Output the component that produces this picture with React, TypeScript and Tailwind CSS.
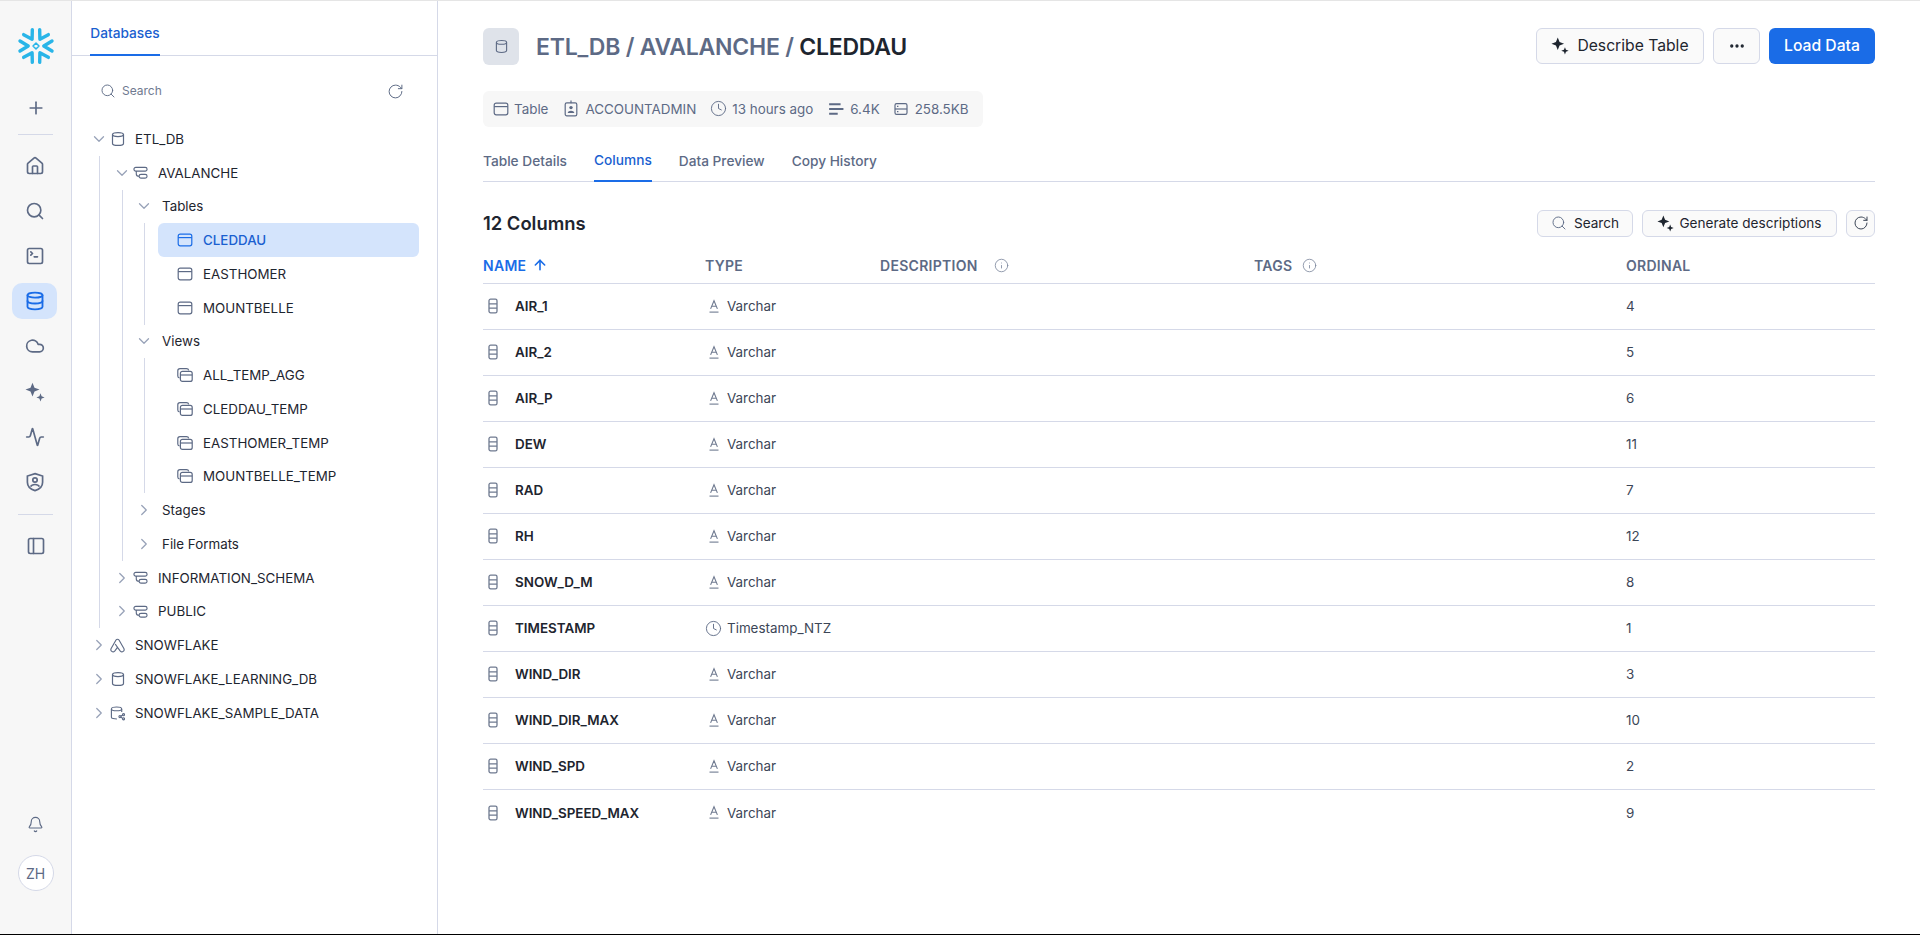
import React from 'react';
import { Plus, House, Search, SquareTerminal, Database, Cloud, Activity, PanelLeft, Bell, ChevronDown, ChevronRight, RotateCw, Info, Clock, Ellipsis, ArrowUp } from 'lucide-react';

type IconProps = { className?: string };

const Snowflake = () => (
  <svg width="38" height="38" viewBox="-19 -19 38 38" fill="none" stroke="#29b5e8" strokeWidth="3.4" strokeLinecap="round" strokeLinejoin="round">
    {[0, 60, 120, 180, 240, 300].map((a) => (
      <path key={a} transform={`rotate(${a})`} d="M16 -5 L7.8 0 L16 5" />
    ))}
    <path d="M0 -3 L3 0 L0 3 L-3 0 Z" strokeWidth="1.5" />
  </svg>
);

const Sparkle = ({ className }: IconProps) => (
  <svg className={className} viewBox="0 0 16 16" fill="currentColor">
    <path d="M6 0.5 L7.6 4.5 L11.6 6 L7.6 7.6 L6 11.6 L4.4 7.6 L0.4 6 L4.4 4.5 Z" />
    <path d="M12.4 9 L13.3 11.3 L15.7 12.3 L13.3 13.2 L12.4 15.6 L11.5 13.2 L9.1 12.3 L11.5 11.3 Z" />
  </svg>
);

const TableIcon = ({ className }: IconProps) => (
  <svg className={className} viewBox="0 0 16 16" fill="none" stroke="currentColor" strokeWidth="1.2">
    <rect x="1.2" y="2.2" width="13.6" height="11.6" rx="2" />
    <path d="M1.2 5.6 H14.8" />
  </svg>
);

const DbIcon = ({ className }: IconProps) => (
  <svg className={className} viewBox="0 0 14 16" fill="none" stroke="currentColor" strokeWidth="1.2">
    <path d="M1.5 3.6 C1.5 0.9 12.5 0.9 12.5 3.6 V12.4 C12.5 15.1 1.5 15.1 1.5 12.4 Z" />
    <path d="M1.5 3.6 C1.5 6.3 12.5 6.3 12.5 3.6" />
  </svg>
);

const SchemaIcon = ({ className }: IconProps) => (
  <svg className={className} viewBox="0 0 16 16" fill="none" stroke="currentColor" strokeWidth="1.2">
    <rect x="1" y="2.5" width="14" height="4" rx="2" />
    <rect x="6.5" y="10" width="8.5" height="4" rx="2" />
    <path d="M3.5 6.5 V9.5 C3.5 11.2 4.6 12 6.5 12" />
  </svg>
);

const ViewIcon = ({ className }: IconProps) => (
  <svg className={className} viewBox="0 0 16 16" fill="none" stroke="currentColor" strokeWidth="1.2">
    <path d="M2.6 11 C1.5 10.8 0.8 10 0.8 9 V3.8 C0.8 2.5 1.8 1.6 3 1.6 H9.5 C10.6 1.6 11.5 2.3 11.7 3.4" />
    <rect x="3.4" y="4.4" width="11.8" height="10" rx="2" />
    <path d="M3.4 8 H15.2" />
  </svg>
);

const ColumnIcon = ({ className }: IconProps) => (
  <svg className={className} viewBox="0 0 10 16" fill="none" stroke="currentColor" strokeWidth="1.3">
    <rect x="1" y="1.2" width="8" height="13.6" rx="1.6" />
    <path d="M1 5.8 H9 M1 10.2 H9" />
  </svg>
);

const VarcharIcon = ({ className }: IconProps) => (
  <svg className={className} viewBox="0 0 12 14" fill="none" stroke="currentColor" strokeWidth="1.1">
    <path d="M2.6 9.4 L6 1.2 L9.4 9.4 M3.7 6.8 H8.3" />
    <path d="M1.5 12.6 H10.5" />
  </svg>
);

const Badge = ({ className }: IconProps) => (
  <svg className={className} viewBox="0 0 14 17" fill="none" stroke="currentColor" strokeWidth="1.2">
    <rect x="1.2" y="2.8" width="11.6" height="13" rx="1.6" />
    <path d="M7 0.6 V3.2" />
    <circle cx="7" cy="7.6" r="1.7" fill="currentColor" stroke="none" />
    <path d="M3.7 13 C4 10 10 10 10.3 13 Z" fill="currentColor" stroke="none" />
  </svg>
);

const RowsIcon = ({ className }: IconProps) => (
  <svg className={className} viewBox="0 0 14 14" fill="none" stroke="currentColor" strokeWidth="1.8">
    <path d="M1 2.8 H11 M1 7 H13.5 M1 11.2 H8.5" />
  </svg>
);

const StorageIcon = ({ className }: IconProps) => (
  <svg className={className} viewBox="0 0 14 14" fill="none" stroke="currentColor" strokeWidth="1.2">
    <rect x="1" y="1.6" width="12" height="10.8" rx="1.6" />
    <path d="M1 7 H13" />
    <path d="M3 4.3 H4.4 M3 9.7 H4.4" />
  </svg>
);

const ShieldIcon = ({ className }: IconProps) => (
  <svg className={className} viewBox="0 0 20 20" fill="none" stroke="currentColor" strokeWidth="1.7">
    <path d="M10 1.6 L17.6 4 V10.2 C17.6 14.6 14 17.4 10 18.6 C6 17.4 2.4 14.6 2.4 10.2 V4 Z" />
    <circle cx="10" cy="8" r="2.2" />
    <path d="M5.6 14.6 C7 11.8 13 11.8 14.4 14.6" />
  </svg>
);

const ShareDbIcon = ({ className }: IconProps) => (
  <svg className={className} viewBox="0 0 16 16" fill="none" stroke="currentColor" strokeWidth="1.2">
    <path d="M7.4 14.4 C4.4 14.4 1.5 13.8 1.5 12.4 V3.6 C1.5 0.9 12.5 0.9 12.5 3.6 V7" />
    <path d="M1.5 3.6 C1.5 6.3 12.5 6.3 12.5 3.6" />
    <circle cx="10.6" cy="11.8" r="1.1" />
    <circle cx="14.4" cy="9.8" r="1.1" />
    <circle cx="14.4" cy="14.2" r="1.1" />
    <path d="M11.6 11.3 L13.4 10.3 M11.6 12.3 L13.4 13.7" />
  </svg>
);

const SharedIcon = ({ className }: IconProps) => (
  <svg className={className} viewBox="0 0 16 16" fill="none" stroke="currentColor" strokeWidth="1.2" strokeLinejoin="round">
    <path d="M6.4 2.2 C7.2 1 8.8 1 9.6 2.2 L14.8 11.2 C16 13.8 13 15.8 11 14 L8 10 L5 14 C3 15.8 0 13.8 1.2 11.2 Z" />
    <path d="M8 10 L5.6 6.4" />
  </svg>
);

const railIcon = 'w-5 h-5 text-[#5d6a85]';
const railRow = 'h-[45.2px] flex items-center';

const Rail = () => (
  <aside className="w-[72px] shrink-0 bg-[#f7f7f7] border-r border-[#d5d9e8] flex flex-col items-center">
    <div className="mt-[26px] h-[38px] flex items-center justify-center">
      <Snowflake />
    </div>
    <div className="mt-[31px] h-6 flex items-center justify-center">
      <Plus className="w-5 h-5 text-[#5d6a85]" strokeWidth={2} />
    </div>
    <div className="mt-[14px] w-[35px] h-px bg-[#d5d9e8]" />
    <nav className="mt-[8px] pr-[2px] flex flex-col items-center">
      <div className={railRow}><House className={railIcon} strokeWidth={2} /></div>
      <div className={railRow}><Search className={railIcon} strokeWidth={2} /></div>
      <div className={railRow}><SquareTerminal className={railIcon} strokeWidth={2} /></div>
      <div className={railRow}>
        <div className="w-[45px] h-[36px] rounded-[10px] bg-[#d4e4fc] flex items-center justify-center">
          <Database className="w-5 h-5 text-[#1a6ce7]" strokeWidth={2.2} />
        </div>
      </div>
      <div className={railRow}><Cloud className={railIcon} strokeWidth={2} /></div>
      <div className={railRow}><Sparkle className={railIcon} /></div>
      <div className={railRow}><Activity className={railIcon} strokeWidth={2} /></div>
      <div className={railRow}><ShieldIcon className={railIcon} /></div>
    </nav>
    <div className="mt-[9px] w-[35px] h-px bg-[#d5d9e8]" />
    <div className="mt-[21px] h-5 flex items-center">
      <PanelLeft className={railIcon} strokeWidth={2} />
    </div>
    <div className="mt-auto h-5 flex items-center">
      <Bell className="w-[17px] h-[17px] text-[#5d6a85]" strokeWidth={1.6} />
    </div>
    <div className="mt-[21px] mb-[43px] w-9 h-9 rounded-full border border-[#d5d9e8] bg-white flex items-center justify-center text-[14px] text-[#5d6a85]">
      ZH
    </div>
  </aside>
);

const Chevron = ({ open }: { open?: boolean }) => (
  <span className="w-[14px] shrink-0 flex items-center justify-center text-[#98a2b8]">
    {open ? <ChevronDown className="w-[18px] h-[18px] shrink-0" strokeWidth={1.7} /> : <ChevronRight className="w-[18px] h-[18px] shrink-0" strokeWidth={1.7} />}
  </span>
);

const rowCls = 'h-[33.76px] flex items-center text-[13.35px] text-[#1e252f] whitespace-nowrap';
const iconCls = 'w-[14px] h-4 text-[#5d6a85] shrink-0';

const DbRow = ({ open, icon, label }: { open?: boolean; icon: React.ReactNode; label: string }) => (
  <div className={rowCls}>
    <Chevron open={open} />
    <span className="ml-[4px] w-[15px] flex justify-center">{icon}</span>
    <span className="ml-[10px]">{label}</span>
  </div>
);

const SchemaRow = ({ open, label }: { open?: boolean; label: string }) => (
  <div className={rowCls}>
    <Chevron open={open} />
    <span className="ml-[4px] w-[15px] flex justify-center"><SchemaIcon className="w-[15px] h-[15px] text-[#5d6a85]" /></span>
    <span className="ml-[10px]">{label}</span>
  </div>
);

const KindRow = ({ open, label }: { open?: boolean; label: string }) => (
  <div className={rowCls}>
    <Chevron open={open} />
    <span className="ml-[11px]">{label}</span>
  </div>
);

const LeafRow = ({ view, active, label }: { view?: boolean; active?: boolean; label: string }) => (
  <div className={`${rowCls} rounded-[6px] pl-[19px] ${active ? 'bg-[#d4e4fc] !text-[#1a5fd0] font-medium' : ''}`}>
    {view ? (
      <ViewIcon className="w-4 h-4 text-[#5d6a85] shrink-0" />
    ) : (
      <TableIcon className={`w-4 h-4 shrink-0 ${active ? 'text-[#1a6ce7]' : 'text-[#5d6a85]'}`} />
    )}
    <span className="ml-[10px]">{label}</span>
  </div>
);

const Guide = ({ children, pad }: { children: React.ReactNode; pad: string }) => (
  <div className={`ml-[7px] border-l border-[#d5d9e8] ${pad}`}>{children}</div>
);

const Tree = () => (
  <div className="mt-[17px] pl-[20px] pr-[18px]">
    <DbRow open label="ETL_DB" icon={<DbIcon className={iconCls} />} />
    <Guide pad="pl-[15px]">
      <SchemaRow open label="AVALANCHE" />
      <Guide pad="pl-[14px]">
        <KindRow open label="Tables" />
        <Guide pad="pl-[13px]">
          <LeafRow active label="CLEDDAU" />
          <LeafRow label="EASTHOMER" />
          <LeafRow label="MOUNTBELLE" />
        </Guide>
        <KindRow open label="Views" />
        <Guide pad="pl-[13px]">
          <LeafRow view label="ALL_TEMP_AGG" />
          <LeafRow view label="CLEDDAU_TEMP" />
          <LeafRow view label="EASTHOMER_TEMP" />
          <LeafRow view label="MOUNTBELLE_TEMP" />
        </Guide>
        <KindRow label="Stages" />
        <KindRow label="File Formats" />
      </Guide>
      <SchemaRow label="INFORMATION_SCHEMA" />
      <SchemaRow label="PUBLIC" />
    </Guide>
    <DbRow label="SNOWFLAKE" icon={<SharedIcon className="w-[15px] h-[15px] text-[#5d6a85]" />} />
    <DbRow label="SNOWFLAKE_LEARNING_DB" icon={<DbIcon className={iconCls} />} />
    <DbRow label="SNOWFLAKE_SAMPLE_DATA" icon={<ShareDbIcon className="w-4 h-4 text-[#5d6a85]" />} />
  </div>
);

const Explorer = () => (
  <section className="w-[366px] shrink-0 border-r border-[#d5d9e8] flex flex-col">
    <div className="h-[55px] shrink-0 border-b border-[#d5d9e8] pl-[18px] flex">
      <div className="h-[55px] w-[70px] pt-[11px] border-b-2 border-[#1a6ce7] text-[13.7px] font-medium text-[#1a5fd0] flex items-center justify-center whitespace-nowrap">
        Databases
      </div>
    </div>
    <div className="mt-[21px] h-[28px] flex items-center pl-[28px] pr-[33px]">
      <Search className="w-4 h-4 text-[#5d6a85]" strokeWidth={1.4} />
      <span className="ml-[6px] text-[12px] text-[#6f7a90]">Search</span>
      <RotateCw className="ml-auto w-[17px] h-[17px] text-[#5d6a85]" strokeWidth={1.4} />
    </div>
    <Tree />
  </section>
);

const columns = [
  { name: 'AIR_1', type: 'Varchar', ordinal: 4 },
  { name: 'AIR_2', type: 'Varchar', ordinal: 5 },
  { name: 'AIR_P', type: 'Varchar', ordinal: 6 },
  { name: 'DEW', type: 'Varchar', ordinal: 11 },
  { name: 'RAD', type: 'Varchar', ordinal: 7 },
  { name: 'RH', type: 'Varchar', ordinal: 12 },
  { name: 'SNOW_D_M', type: 'Varchar', ordinal: 8 },
  { name: 'TIMESTAMP', type: 'Timestamp_NTZ', ordinal: 1 },
  { name: 'WIND_DIR', type: 'Varchar', ordinal: 3 },
  { name: 'WIND_DIR_MAX', type: 'Varchar', ordinal: 10 },
  { name: 'WIND_SPD', type: 'Varchar', ordinal: 2 },
  { name: 'WIND_SPEED_MAX', type: 'Varchar', ordinal: 9 },
];

const gridCols = 'grid grid-cols-[222px_175px_374px_372px_1fr]';

const Meta = ({ icon, label, gap }: { icon: React.ReactNode; label: string; gap: string }) => (
  <span className={`flex items-center whitespace-nowrap ${gap}`}>
    {icon}
    <span>{label}</span>
  </span>
);

const ColumnsTable = () => (
  <div className="mt-[14px]">
    <div className={`${gridCols} h-[33px] pb-[4px] border-b border-[#d5d9e8] text-[14px] font-semibold tracking-[0.02em] text-[#5d6a85] items-center`}>
      <span className="flex items-center gap-[6px] text-[#1a6ce7]">
        NAME <ArrowUp className="w-[16px] h-[16px]" strokeWidth={2.4} />
      </span>
      <span>TYPE</span>
      <span className="flex items-center gap-[16px]">
        DESCRIPTION <Info className="w-[15px] h-[15px] text-[#7b869c]" strokeWidth={1.3} />
      </span>
      <span className="flex items-center gap-[10px]">
        TAGS <Info className="w-[15px] h-[15px] text-[#7b869c]" strokeWidth={1.3} />
      </span>
      <span>ORDINAL</span>
    </div>
    {columns.map((c, i) => (
      <div key={c.name} className={`${gridCols} h-[46px] items-center text-[13.4px] text-[#1e252f] ${i < columns.length - 1 ? 'border-b border-[#d5d9e8]' : ''}`}>
        <span className="flex items-center">
          <ColumnIcon className="ml-[5px] w-[10px] h-[16px] text-[#6f7a90]" />
          <span className="ml-[17px] font-semibold">{c.name}</span>
        </span>
        <span className="flex items-center">
          {c.type === 'Varchar' ? (
            <span className="w-[16px] ml-[1px] flex justify-center"><VarcharIcon className="w-[12px] h-[15px] text-[#6f7a90]" /></span>
          ) : (
            <Clock className="w-[17px] h-[17px] text-[#5d6a85]" strokeWidth={1.3} />
          )}
          <span className="ml-[5px] text-[#3c4657]">{c.type}</span>
        </span>
        <span />
        <span />
        <span className="text-[#3c4657]">{c.ordinal}</span>
      </div>
    ))}
  </div>
);

const Main = () => (
  <main className="flex-1 min-w-0 pl-[45px] pr-[45px]">
    <header className="pt-[27px] flex items-start">
      <div className="w-[36px] h-[37px] rounded-[6px] bg-[#dfe3ea] flex items-center justify-center">
        <DbIcon className="w-[13px] h-[15px] text-[#5d6a85]" />
      </div>
      <h1 className="ml-[17px] h-[37px] pt-[1px] flex items-center text-[23px] font-semibold tracking-[-0.01em] text-[#5d6a85] whitespace-pre">
        ETL_DB / AVALANCHE / <span className="text-[#1e252f]">CLEDDAU</span>
      </h1>
      <div className="ml-auto flex items-center gap-[9px]">
        <button className="w-[168px] h-[36px] rounded-[6px] border border-[#d5d9e8] bg-[#fafafa] flex items-center justify-center gap-[8px] text-[15.7px] text-[#1e252f]">
          <Sparkle className="w-[18px] h-[18px] text-[#1e252f]" /> Describe Table
        </button>
        <button className="w-[47px] h-[36px] rounded-[6px] border border-[#d5d9e8] bg-[#fafafa] flex items-center justify-center text-[#1e252f]">
          <Ellipsis className="w-[18px] h-[18px]" strokeWidth={2.4} />
        </button>
        <button className="w-[106px] h-[36px] rounded-[6px] bg-[#1a6ce7] text-[15.7px] font-medium text-white">Load Data</button>
      </div>
    </header>

    <div className="mt-[26px] w-[500px] h-[36px] rounded-[6px] bg-[#f7f7f7] pl-[10px] flex items-center gap-[14px] text-[13.4px] text-[#5d6a85]">
      <Meta gap="gap-[5px]" icon={<TableIcon className="w-4 h-4" />} label="Table" />
      <Meta gap="gap-[7px] ml-[2px]" icon={<Badge className="w-[14px] h-[17px]" />} label="ACCOUNTADMIN" />
      <Meta gap="gap-[5px]" icon={<Clock className="w-[17px] h-[17px]" strokeWidth={1.3} />} label="13 hours ago" />
      <Meta gap="gap-[6px] ml-[1px]" icon={<RowsIcon className="w-4 h-4" />} label="6.4K" />
      <Meta gap="gap-[7px]" icon={<StorageIcon className="w-[14px] h-[14px]" />} label="258.5KB" />
    </div>

    <div className="mt-[16px] h-[39px] border-b border-[#d5d9e8] flex gap-[27px] text-[13.7px] font-medium text-[#5d6a85] whitespace-nowrap">
      <span className="h-[39px] pb-[2px] flex items-center">Table Details</span>
      <span className="h-[39px] pb-[2px] flex items-center border-b-2 border-[#1a6ce7] text-[#1a5fd0]">Columns</span>
      <span className="h-[39px] pb-[2px] flex items-center">Data Preview</span>
      <span className="h-[39px] pb-[2px] flex items-center">Copy History</span>
    </div>

    <div className="mt-[27px] flex items-center h-[28px]">
      <h2 className="pt-[2px] text-[18.4px] font-semibold text-[#1e252f]">12 Columns</h2>
      <div className="ml-auto flex items-center gap-[9px] text-[13.6px] text-[#1e252f]">
        <button className="w-[96px] h-[27px] rounded-[6px] border border-[#d5d9e8] bg-[#fafafa] flex items-center justify-center gap-[7px]">
          <Search className="w-4 h-4 text-[#5d6a85]" strokeWidth={1.4} /> Search
        </button>
        <button className="w-[195px] h-[27px] rounded-[6px] border border-[#d5d9e8] bg-[#fafafa] flex items-center justify-center gap-[5px]">
          <Sparkle className="w-[17px] h-[17px] text-[#1e252f]" /> Generate descriptions
        </button>
        <button className="w-[29px] h-[27px] rounded-[6px] border border-[#d5d9e8] bg-[#fafafa] flex items-center justify-center">
          <RotateCw className="w-4 h-4 text-[#3c4657]" strokeWidth={1.5} />
        </button>
      </div>
    </div>

    <ColumnsTable />
  </main>
);

export default function App() {
  return (
    <div className="h-[935px] overflow-hidden flex border-t border-b border-t-[#e5e5e5] border-b-black bg-white [font-family:Inter,sans-serif]">
      <Rail />
      <Explorer />
      <Main />
    </div>
  );
}
